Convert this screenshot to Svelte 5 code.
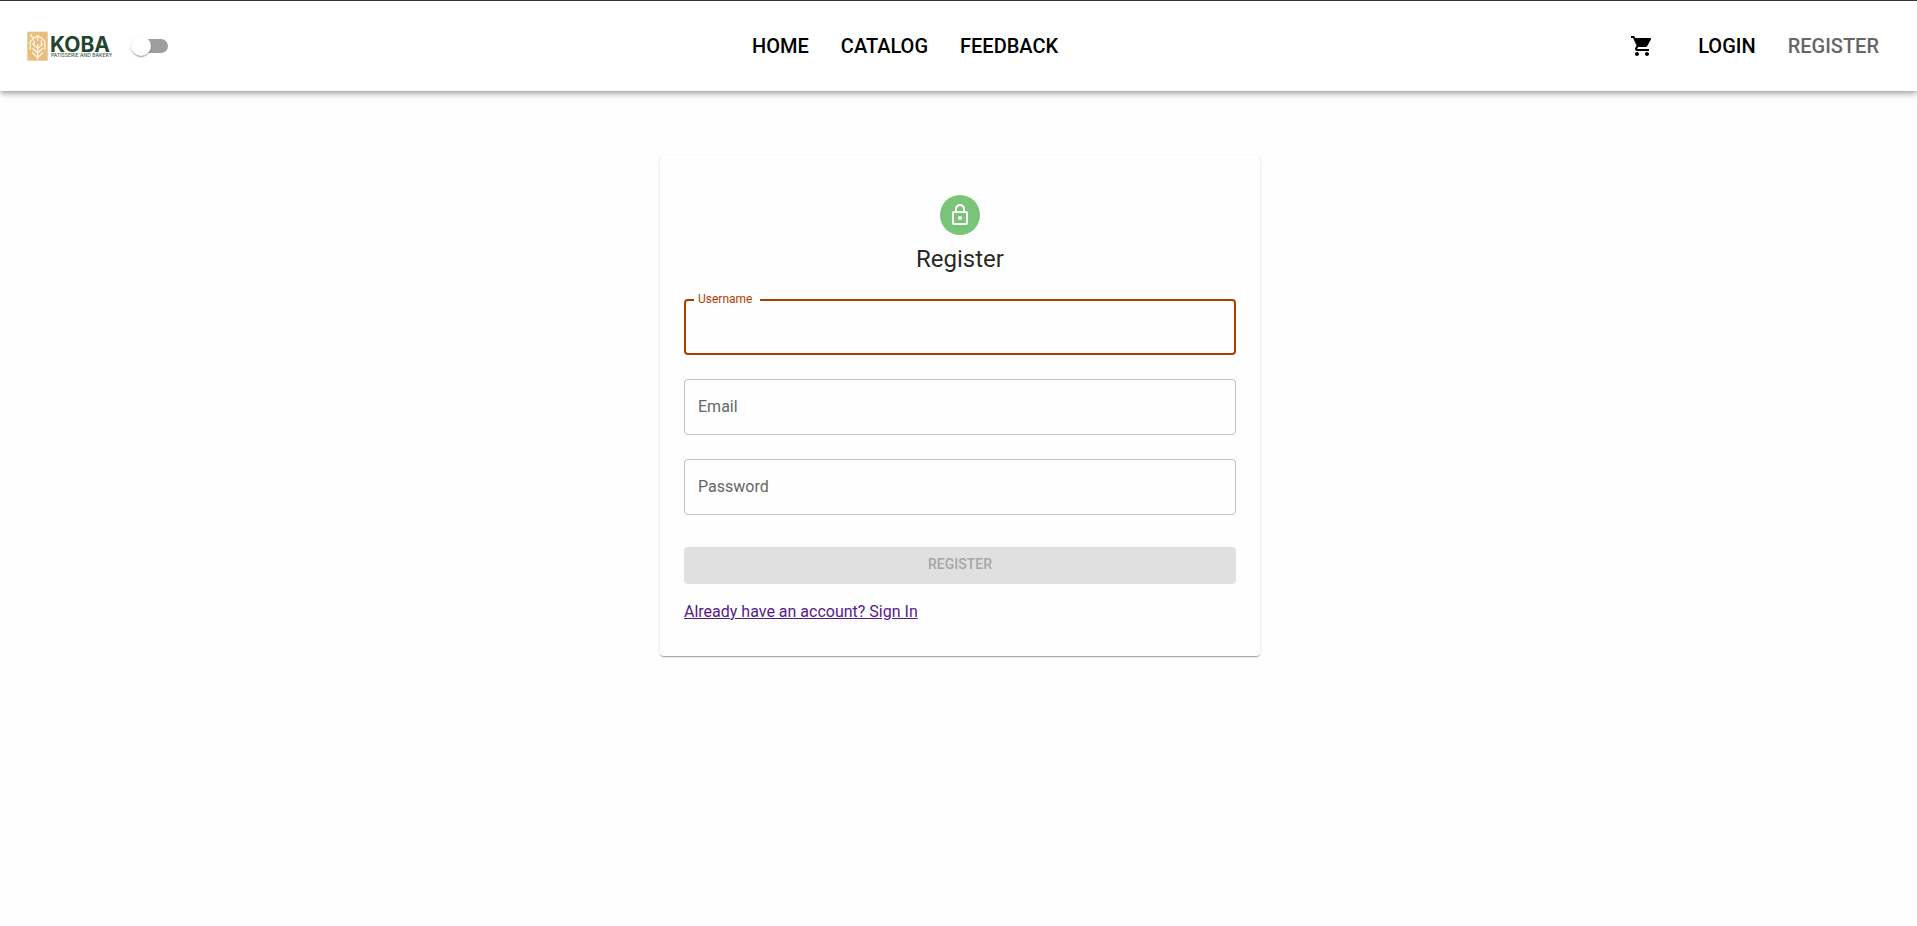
<script>
  const links = ['Home', 'Catalog', 'Feedback'];
  const fields = [
    { id: 'username', label: 'Username', type: 'text' },
    { id: 'email', label: 'Email', type: 'email' },
    { id: 'password', label: 'Password', type: 'password' }
  ];
  let values = $state({ username: '', email: '', password: '' });
  let active = $state('username');
  let ready = $derived(fields.every((f) => values[f.id] !== ''));
</script>

<header>
  <div class="brand">
    <svg class="logo" width="86" height="32" viewBox="0 0 86 32" role="img" aria-label="Koba">
      <rect x="1.300" y="1.700" width="20.400" height="29" fill="#e9bd7c" />
      <g fill="none" stroke="#fdf6ea" stroke-width="1.300">
        <path d="M11.600 29.500V14M4.200 20v-8.500L8 8l3.600-2.200L15.500 8l3.300 3.500V20M4.800 4.200l.6 2.300L8 8M11.600 6v5M8 10.500v3.500M15.300 10.500v3.500" />
        <path d="M6.300 13.500l5.300 5.200 5.300-5.200M6.300 18l5.300 5.200 5.300-5.200M6.300 22.500l5.300 5.200 5.300-5.200" />
      </g>
      <text class="name" x="24" y="22">KOBA</text>
      <text class="tag" x="25" y="27">PATISSERIE AND BAKERY</text>
    </svg>
    <label class="switch">
      <input type="checkbox" aria-label="Dark mode" />
      <span class="track"></span>
    </label>
  </div>
  <nav aria-label="Main">
    {#each links as link}
      <a href="#{link.toLowerCase()}">{link}</a>
    {/each}
  </nav>
  <div class="account">
    <button class="cart" type="button" aria-label="Cart">
      <svg width="24" height="24" viewBox="0 0 24 24" fill="currentColor">
        <path d="M7 18c-1.100 0-1.990.9-1.990 2S5.900 22 7 22s2-.9 2-2-.9-2-2-2zM1 2v2h2l3.600 7.590-1.350 2.450c-.16.28-.25.61-.25.96 0 1.100.9 2 2 2h12v-2H7.420c-.14 0-.25-.11-.25-.25l.03-.12.9-1.630h7.450c.75 0 1.410-.41 1.750-1.030l3.580-6.490c.08-.14.12-.31.12-.48 0-.55-.45-1-1-1H5.210l-.94-2H1zm16 16c-1.100 0-1.990.9-1.990 2s.89 2 1.990 2 2-.9 2-2-.9-2-2-2z" />
      </svg>
    </button>
    <a href="#login">Login</a>
    <a href="#register" class="current" aria-current="page">Register</a>
  </div>
</header>

<main>
  <form class="card" onsubmit={(e) => e.preventDefault()}>
    <div class="avatar">
      <svg width="24" height="24" viewBox="0 0 24 24" fill="currentColor" aria-hidden="true">
        <path d="M12 17c1.100 0 2-.9 2-2s-.9-2-2-2-2 .9-2 2 .9 2 2 2zm6-9h-1V6c0-2.760-2.240-5-5-5S7 3.240 7 6v2H6c-1.100 0-2 .9-2 2v10c0 1.100.9 2 2 2h12c1.100 0 2-.9 2-2V10c0-1.100-.9-2-2-2zM8.900 6c0-1.710 1.390-3.100 3.100-3.100s3.100 1.390 3.100 3.100v2H8.900V6zM18 20H6V10h12v10z" />
      </svg>
    </div>
    <h1>Register</h1>
    <div class="fields">
      {#each fields as field}
        <div class="field" class:active={active === field.id} class:raised={active === field.id || values[field.id]}>
          <label for={field.id}>{field.label}</label>
          <input id={field.id} type={field.type} bind:value={values[field.id]} onfocus={() => (active = field.id)} />
        </div>
      {/each}
    </div>
    <button class="submit" type="submit" disabled={!ready}>Register</button>
    <a class="signin" href="#login">Already have an account? Sign In</a>
  </form>
</main>

<style>
  :global(body) {
    background: #fefefe;
    color: rgba(0, 0, 0, 0.87);
    font-family: Roboto, sans-serif;
    font-size: 16px;
    line-height: 24px;
  }
  header, main, header *, main * { box-sizing: border-box; }
  header {
    display: flex;
    align-items: center;
    justify-content: space-between;
    min-height: 91px;
    padding: 0 22px 0 26px;
    border-top: 1px solid #333;
    background: #fff;
    box-shadow: 0 2px 4px -1px rgba(0, 0, 0, 0.2), 0 4px 5px rgba(0, 0, 0, 0.14), 0 1px 10px rgba(0, 0, 0, 0.12);
  }
  .brand, nav, .account { display: flex; align-items: center; }
  .brand { gap: 22px; padding-right: 24px; }
  .logo { display: block; }
  .name { font: 700 21px Inter, sans-serif; fill: #21452d; }
  .tag { font: 500 5px Inter, sans-serif; fill: #3d5a46; }
  .switch { display: flex; align-items: center; width: 34px; height: 38px; position: relative; }
  .switch input { position: absolute; inset: 0; margin: 0; opacity: 0; }
  .track { width: 34px; height: 14px; border-radius: 7px; background: #9e9e9e; }
  .track::before {
    content: '';
    position: absolute;
    left: -3px;
    top: 9px;
    width: 20px;
    height: 20px;
    border-radius: 50%;
    background: #fff;
    box-shadow: 0 2px 1px -1px rgba(0, 0, 0, 0.2), 0 1px 1px rgba(0, 0, 0, 0.14), 0 1px 3px rgba(0, 0, 0, 0.12);
  }
  .switch input:checked + .track::before { left: 17px; }
  header a {
    padding: 8px 16px;
    color: #000;
    font-size: 20px;
    font-weight: 500;
    text-decoration: none;
    text-transform: uppercase;
  }
  header a.current { color: #666; }
  .cart { display: flex; margin: 0 16px 0 0; padding: 12px; border: 0; background: none; color: #000; }
  main { display: flex; justify-content: center; padding: 64px 24px 64px 27px; }
  .card {
    display: flex;
    flex-direction: column;
    width: 100%;
    max-width: 600px;
    padding: 40px 24px 32px;
    border-radius: 4px;
    background: #fefefe;
    box-shadow: 0 2px 1px -1px rgba(0, 0, 0, 0.2), 0 1px 1px rgba(0, 0, 0, 0.14), 0 1px 3px rgba(0, 0, 0, 0.12);
  }
  .avatar {
    display: flex;
    align-items: center;
    justify-content: center;
    align-self: center;
    width: 40px;
    height: 40px;
    border-radius: 50%;
    background: #78c478;
    color: #fff;
  }
  h1 { margin: 8px 0 24px; font-size: 24px; font-weight: 400; line-height: 32px; text-align: center; }
  .fields { display: flex; flex-direction: column; gap: 24px; }
  .field { display: flex; position: relative; }
  .field input {
    width: 100%;
    height: 56px;
    padding: 16px 14px;
    border: 1px solid #c3c3c3;
    border-radius: 4px;
    outline: 0;
    background: transparent;
    font: inherit;
  }
  .field label {
    position: absolute;
    left: 14px;
    top: 16px;
    color: #666;
    pointer-events: none;
  }
  .field.raised label {
    left: 10px;
    top: -8px;
    padding: 0 8px 0 4px;
    background: #fefefe;
    font-size: 12px;
    line-height: 16px;
  }
  .field.active label { color: #b23c00; }
  .field.active input { border: 2px solid #b23c00; }
  .submit {
    height: 37px;
    margin: 32px 0 16px;
    padding: 0 16px 3px;
    border: 0;
    border-radius: 4px;
    background: #78c478;
    color: #fff;
    font: 500 14px/24px Roboto, sans-serif;
    text-transform: uppercase;
  }
  .submit:disabled { background: #e0e0e0; color: #a6a6a6; }
  .signin { align-self: flex-start; color: #551a8b; }
</style>
